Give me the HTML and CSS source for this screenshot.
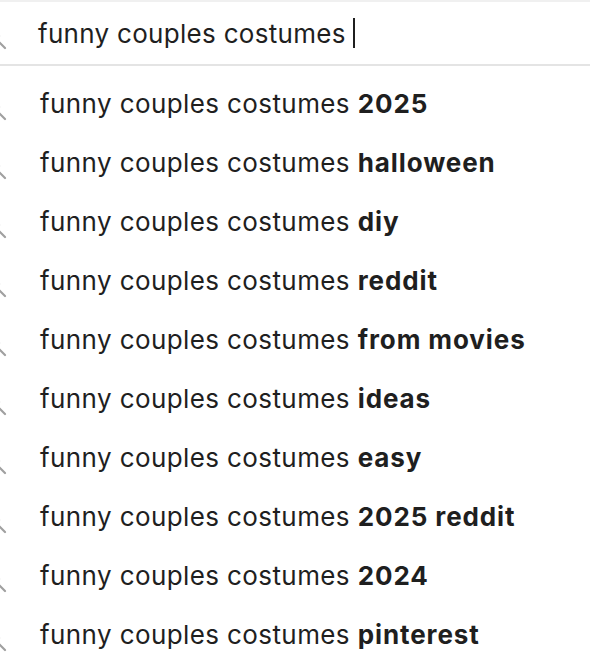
FILE: index.html
```html
<!DOCTYPE html>
<html lang="en">
<head>
    <meta charset="UTF-8">
    <meta name="viewport" content="width=device-width, initial-scale=1.0">
    <title>Search suggestions</title>
    <link rel="stylesheet" href="styles.css">
</head>
<body>
    <div class="search-box">
        <svg class="icon" width="24" height="24" viewBox="0 0 24 24"><circle cx="8" cy="8" r="6"/><line x1="12.5" y1="12.5" x2="20" y2="20"/></svg>
        <span class="query">funny couples costumes</span><span class="caret"></span>
    </div>
    <ul class="suggestions">
        <li><svg class="icon" width="24" height="24" viewBox="0 0 24 24"><circle cx="8" cy="8" r="6"/><line x1="12.5" y1="12.5" x2="20" y2="20"/></svg><span>funny couples costumes <b>2025</b></span></li>
        <li><svg class="icon" width="24" height="24" viewBox="0 0 24 24"><circle cx="8" cy="8" r="6"/><line x1="12.5" y1="12.5" x2="20" y2="20"/></svg><span>funny couples costumes <b>halloween</b></span></li>
        <li><svg class="icon" width="24" height="24" viewBox="0 0 24 24"><circle cx="8" cy="8" r="6"/><line x1="12.5" y1="12.5" x2="20" y2="20"/></svg><span>funny couples costumes <b>diy</b></span></li>
        <li><svg class="icon" width="24" height="24" viewBox="0 0 24 24"><circle cx="8" cy="8" r="6"/><line x1="12.5" y1="12.5" x2="20" y2="20"/></svg><span>funny couples costumes <b>reddit</b></span></li>
        <li><svg class="icon" width="24" height="24" viewBox="0 0 24 24"><circle cx="8" cy="8" r="6"/><line x1="12.5" y1="12.5" x2="20" y2="20"/></svg><span>funny couples costumes <b>from movies</b></span></li>
        <li><svg class="icon" width="24" height="24" viewBox="0 0 24 24"><circle cx="8" cy="8" r="6"/><line x1="12.5" y1="12.5" x2="20" y2="20"/></svg><span>funny couples costumes <b>ideas</b></span></li>
        <li><svg class="icon" width="24" height="24" viewBox="0 0 24 24"><circle cx="8" cy="8" r="6"/><line x1="12.5" y1="12.5" x2="20" y2="20"/></svg><span>funny couples costumes <b>easy</b></span></li>
        <li><svg class="icon" width="24" height="24" viewBox="0 0 24 24"><circle cx="8" cy="8" r="6"/><line x1="12.5" y1="12.5" x2="20" y2="20"/></svg><span>funny couples costumes <b>2025 reddit</b></span></li>
        <li><svg class="icon" width="24" height="24" viewBox="0 0 24 24"><circle cx="8" cy="8" r="6"/><line x1="12.5" y1="12.5" x2="20" y2="20"/></svg><span>funny couples costumes <b>2024</b></span></li>
        <li><svg class="icon" width="24" height="24" viewBox="0 0 24 24"><circle cx="8" cy="8" r="6"/><line x1="12.5" y1="12.5" x2="20" y2="20"/></svg><span>funny couples costumes <b>pinterest</b></span></li>
    </ul>
</body>
</html>
```
FILE: styles.css
```css
body {
    margin: 0;
    background-color: #ffffff;
    font-family: Inter, 'Noto Sans', sans-serif;
    color: #1f1f1f;
    overflow: hidden;
}
.search-box {
    display: flex;
    align-items: center;
    height: 62px;
    border-top: 2px solid #f0f0f0;
    border-bottom: 2px solid #e4e4e4;
    font-size: 26px;
    letter-spacing: 0.3px;
}
.icon {
    flex: none;
    margin-left: -15px;
    margin-right: 29px;
    margin-top: 14px;
    fill: none;
    stroke: #a0a0a0;
    stroke-width: 2.2;
    stroke-linecap: round;
}
.caret {
    display: inline-block;
    width: 2px;
    height: 30px;
    margin-left: 7px;
    background-color: #1f1f1f;
}
.suggestions {
    list-style: none;
    margin: 0;
    padding: 8px 0 0;
}
.suggestions li {
    display: flex;
    align-items: center;
    height: 59px;
    font-size: 26px;
    letter-spacing: 0.4px;
}
.suggestions li .icon {
    margin-right: 31px;
}
.suggestions b {
    font-weight: 700;
    letter-spacing: 0.9px;
}
```
